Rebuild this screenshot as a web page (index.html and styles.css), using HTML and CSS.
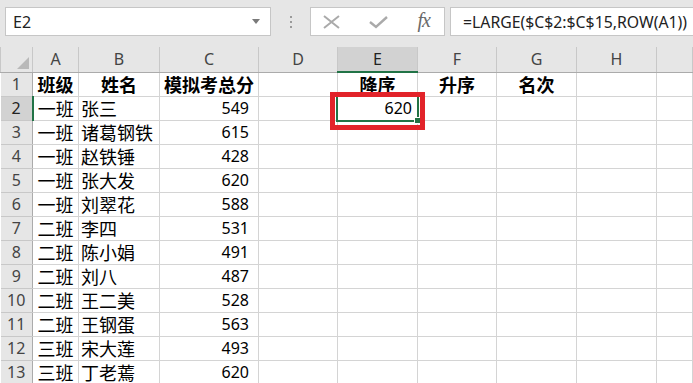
FILE: index.html
```html
<!DOCTYPE html>
<html lang="zh-CN">
<head>
  <meta charset="UTF-8" />
  <meta name="viewport" content="width=device-width, initial-scale=1" />
  <title>LARGE 排序</title>
  <link rel="stylesheet" href="styles.css">
</head>
<body>
  <div class="toolbar">
    <div class="namebox">
      <span>E2</span>
      <svg class="drop" width="8" height="5" viewBox="0 0 8 5"><path d="M0 0h8L4 5z" fill="#7a7a7a"/></svg>
    </div>
    <div class="grip">
      <span></span><span></span><span></span>
    </div>
    <div class="fxbox">
      <svg width="17" height="14" viewBox="0 0 17 14"><path d="M1 1L16 13M16 1L1 13" stroke="#aaa" stroke-width="2" fill="none"/></svg>
      <svg width="19" height="14" viewBox="0 0 19 14"><path d="M1 7L7 12L18 2" stroke="#aaa" stroke-width="2.4" fill="none"/></svg>
      <span class="fx"><i>f</i>x</span>
    </div>
    <div class="formula">=LARGE($C$2:$C$15,ROW(A1))</div>
  </div>

  <table class="sheet">
    <colgroup>
      <col style="width:32px">
      <col style="width:46px">
      <col style="width:81px">
      <col style="width:99px">
      <col style="width:79px">
      <col style="width:80px">
      <col style="width:79px">
      <col style="width:80px">
      <col style="width:80px">
      <col>
    </colgroup>
    <thead>
      <tr>
        <th class="corner"><span class="tri"></span></th>
        <th>A</th><th>B</th><th>C</th><th>D</th>
        <th class="hsel">E</th><th>F</th><th>G</th><th>H</th><th></th>
      </tr>
    </thead>
    <tbody>
      <tr>
        <th>1</th>
        <td class="title">班级</td><td class="title">姓名</td><td class="title">模拟考总分</td><td></td>
        <td class="title">降序</td><td class="title">升序</td><td class="title">名次</td><td></td><td></td>
      </tr>
      <tr>
        <th class="hsel">2</th>
        <td class="cls">一班</td><td>张三</td><td class="num">549</td><td></td>
        <td class="sel"><span class="val">620</span><span class="mark"></span></td><td></td><td></td><td></td><td></td>
      </tr>
      <tr><th>3</th><td class="cls">一班</td><td>诸葛钢铁</td><td class="num">615</td><td></td><td></td><td></td><td></td><td></td><td></td></tr>
      <tr><th>4</th><td class="cls">一班</td><td>赵铁锤</td><td class="num">428</td><td></td><td></td><td></td><td></td><td></td><td></td></tr>
      <tr><th>5</th><td class="cls">一班</td><td>张大发</td><td class="num">620</td><td></td><td></td><td></td><td></td><td></td><td></td></tr>
      <tr><th>6</th><td class="cls">一班</td><td>刘翠花</td><td class="num">588</td><td></td><td></td><td></td><td></td><td></td><td></td></tr>
      <tr><th>7</th><td class="cls">二班</td><td>李四</td><td class="num">531</td><td></td><td></td><td></td><td></td><td></td><td></td></tr>
      <tr><th>8</th><td class="cls">二班</td><td>陈小娟</td><td class="num">491</td><td></td><td></td><td></td><td></td><td></td><td></td></tr>
      <tr><th>9</th><td class="cls">二班</td><td>刘八</td><td class="num">487</td><td></td><td></td><td></td><td></td><td></td><td></td></tr>
      <tr><th>10</th><td class="cls">二班</td><td>王二美</td><td class="num">528</td><td></td><td></td><td></td><td></td><td></td><td></td></tr>
      <tr><th>11</th><td class="cls">二班</td><td>王钢蛋</td><td class="num">563</td><td></td><td></td><td></td><td></td><td></td><td></td></tr>
      <tr><th>12</th><td class="cls">三班</td><td>宋大莲</td><td class="num">493</td><td></td><td></td><td></td><td></td><td></td><td></td></tr>
      <tr><th>13</th><td class="cls">三班</td><td>丁老蔫</td><td class="num">620</td><td></td><td></td><td></td><td></td><td></td><td></td></tr>
    </tbody>
  </table>
</body>
</html>
```

FILE: styles.css
```css
html, body {
  margin: 0;
  height: 100%;
  overflow: hidden;
  background: #fff;
}

body {
  font-family: "Noto Sans", "Noto Sans CJK SC", sans-serif;
  color: #000;
}

/* barra de fórmulas */
.toolbar {
  height: 47px;
  box-sizing: border-box;
  background: #e6e6e6;
  display: flex;
  align-items: flex-start;
  padding: 7px 0 0 5px;
}

.namebox,
.fxbox,
.formula {
  height: 29px;
  box-sizing: border-box;
  background: #fff;
  border: 1px solid #c6c6c6;
  display: flex;
  align-items: center;
}

.namebox {
  width: 266px;
  justify-content: space-between;
  padding: 0 10px 0 7px;
  font-size: 16px;
  color: #222;
}

.grip {
  width: 39px;
  height: 29px;
  display: flex;
  flex-direction: column;
  align-items: center;
  justify-content: center;
  gap: 3px;
}

.grip span {
  width: 2px;
  height: 2px;
  background: #9a9a9a;
}

.fxbox {
  width: 135px;
  padding: 0 14px 0 12px;
  justify-content: space-between;
}

.fx {
  font-family: "Liberation Serif", serif;
  font-style: italic;
  font-size: 20px;
  color: #6a6a6a;
  letter-spacing: -1px;
  padding-bottom: 2px;
}

.formula {
  flex: 1;
  margin-left: 5px;
  border-right: none;
  padding-left: 12px;
  font-size: 15.8px;
  color: #222;
}

/* planilha */
.sheet {
  border-collapse: collapse;
  table-layout: fixed;
  width: 693px;
}

.sheet th,
.sheet td {
  padding: 0;
  border: 1px solid #d4d4d4;
  white-space: nowrap;
  overflow: hidden;
}

.sheet thead th {
  height: 24px;
  background: #e6e6e6;
  border-color: #c8c8c8;
  border-top: none;
  border-bottom: 1px solid #ababab;
  font-weight: normal;
  font-size: 16px;
  color: #444;
}

.sheet tbody tr {
  height: 24px;
}

.sheet tbody th {
  background: #e6e6e6;
  border-color: #c8c8c8;
  border-left: none;
  border-right: 1px solid #ababab;
  font-weight: normal;
  font-size: 16px;
  color: #444;
}

.sheet .hsel {
  background: #d2d2d2;
  color: #222;
}

.sheet thead .hsel {
  border-bottom: 2px solid #217346;
}

.sheet tbody .hsel {
  border-right: 2px solid #217346;
}

.corner {
  position: relative;
}

.tri {
  position: absolute;
  right: 3px;
  bottom: 3px;
  width: 0;
  height: 0;
  border-left: 12px solid transparent;
  border-bottom: 12px solid #b9b9b9;
}

.sheet td {
  font-family: "Noto Sans CJK SC", sans-serif;
  font-size: 18px;
  line-height: 22px;
  padding-left: 2px;
}

.sheet td.cls {
  text-align: center;
  padding-left: 0;
}

.sheet td.title {
  font-weight: bold;
  text-align: center;
  padding-left: 0;
}

.sheet td.num {
  font-family: "Noto Sans", "Noto Sans CJK SC", sans-serif;
  font-size: 16px;
  text-align: right;
  padding-right: 9px;
}

/* célula ativa */
.sheet td.sel {
  position: relative;
  overflow: visible;
  text-align: right;
  font-family: "Noto Sans", "Noto Sans CJK SC", sans-serif;
  font-size: 16px;
  padding-right: 5px;
}

.sel::after {
  content: "";
  position: absolute;
  left: -2px;
  top: -2px;
  right: -2px;
  bottom: -2px;
  border: 2px solid #217346;
}

.sel::before {
  content: "";
  position: absolute;
  right: -4px;
  bottom: -4px;
  width: 5px;
  height: 5px;
  background: #217346;
  border: 1px solid #fff;
  z-index: 2;
}

/* destaque vermelho */
.mark {
  position: absolute;
  left: -8px;
  top: -5px;
  right: -8px;
  bottom: -10px;
  border: 5px solid #e2232a;
  z-index: 3;
}
```
